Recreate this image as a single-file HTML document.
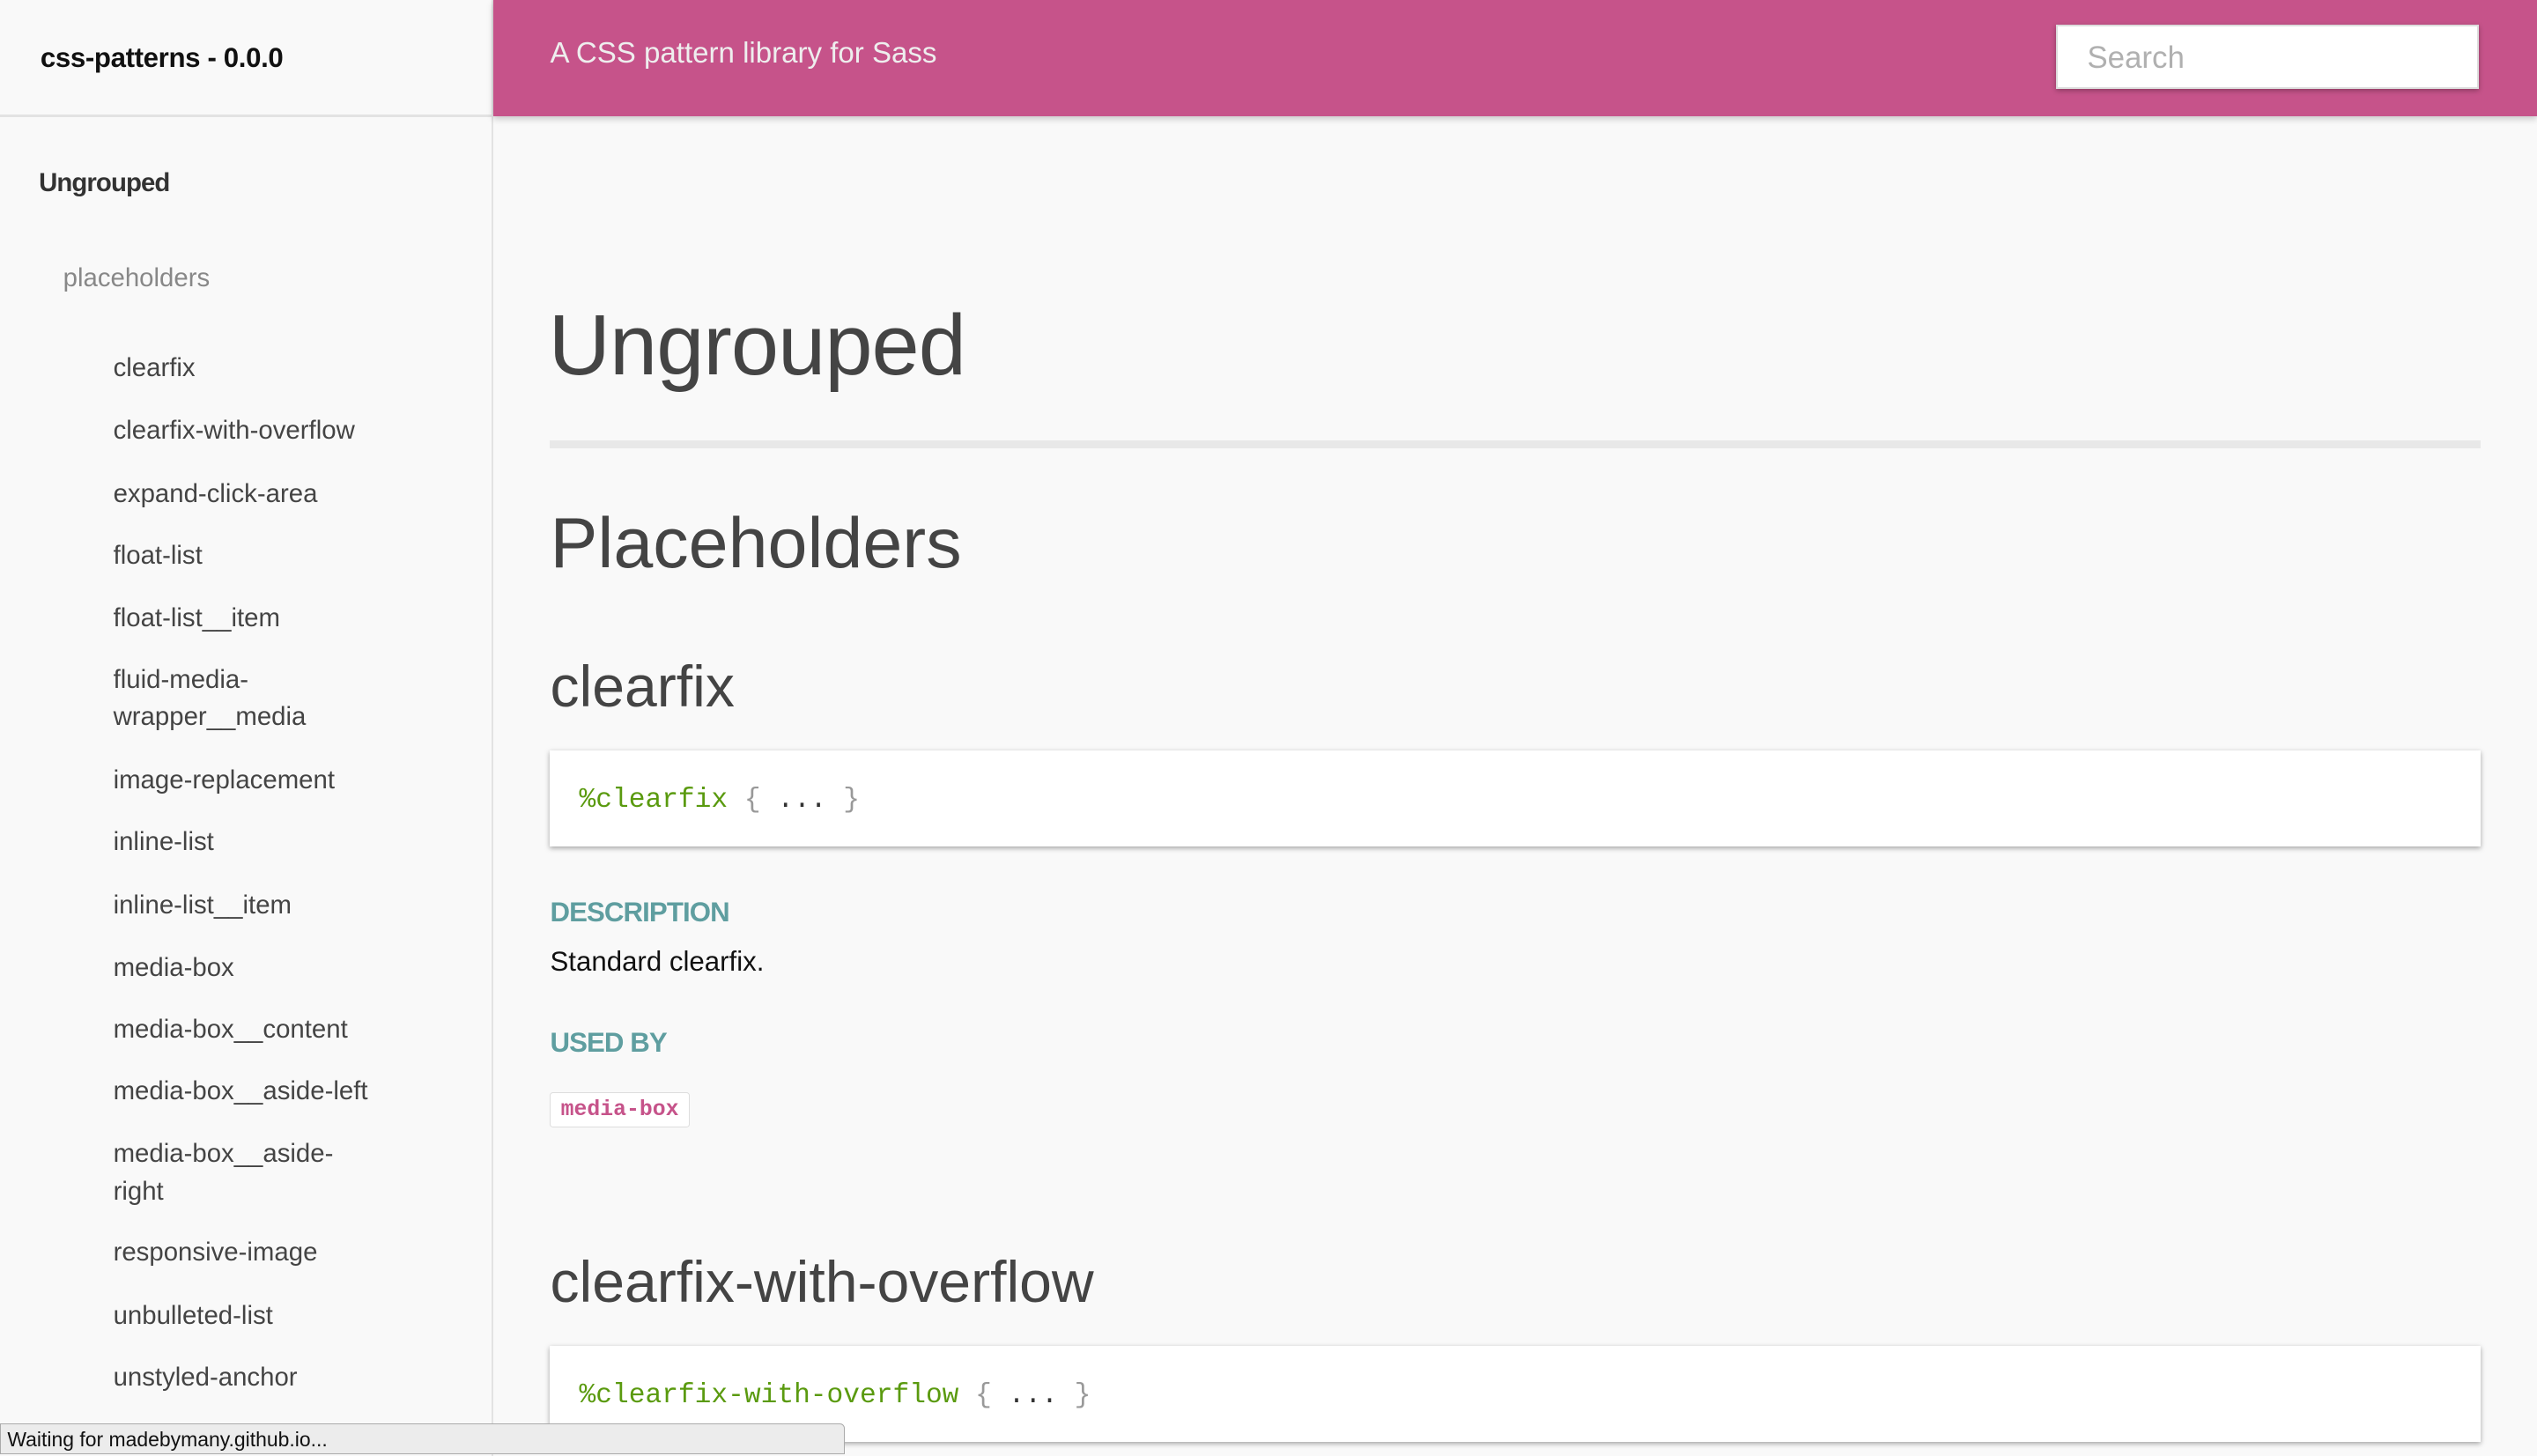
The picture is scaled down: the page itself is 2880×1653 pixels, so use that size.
<!DOCTYPE html>
<html><head><meta charset="utf-8"><style>
html,body{margin:0;padding:0;width:2880px;height:1653px;overflow:hidden;background:#f9f9f9}
#w{zoom:1.836735;width:1568px;height:900px;position:relative;font-family:"Liberation Sans",sans-serif;overflow:hidden;background:#f9f9f9}
.a{position:absolute;white-space:nowrap}
.side{position:absolute;left:0;top:0;width:304px;height:900px;background:#f9f9f9;border-right:1.5px solid #e3e3e3}
.nav{position:absolute;left:70px;font-size:16px;color:#444;line-height:23px;letter-spacing:0px}
.code{position:absolute;left:340px;width:1193px;height:59px;background:#fff;box-shadow:0 1px 3px rgba(0,0,0,.35);font-family:"Liberation Mono",monospace;font-size:17px;line-height:62px}
.code span{padding-left:18px;color:#5a9a0f}
.code b{font-weight:normal;color:#999}
.code i{font-style:normal;color:#333}
.lbl{font-size:17px;font-weight:bold;color:#5f9ea0;letter-spacing:-0.5px}
</style></head><body><div id="w">
<div class="side"></div>
<div class="a" style="left:0;top:71px;width:305px;height:1.5px;background:#e3e3e3"></div>
<div class="a" style="left:25px;top:26px;font-size:17px;font-weight:bold;color:#111;letter-spacing:-0.2px">css-patterns - 0.0.0</div>
<div class="a" style="left:24px;top:104px;font-size:16px;font-weight:bold;color:#333;letter-spacing:-0.5px">Ungrouped</div>
<div class="a" style="left:39px;top:163px;font-size:16px;color:#888;letter-spacing:0px">placeholders</div>
<div class="nav" style="top:216px">clearfix</div>
<div class="nav" style="top:255px">clearfix-with-overflow</div>
<div class="nav" style="top:294px">expand-click-area</div>
<div class="nav" style="top:332px">float-list</div>
<div class="nav" style="top:371px">float-list__item</div>
<div class="nav" style="top:409px">fluid-media-<br>wrapper__media</div>
<div class="nav" style="top:471px">image-replacement</div>
<div class="nav" style="top:509px">inline-list</div>
<div class="nav" style="top:548px">inline-list__item</div>
<div class="nav" style="top:587px">media-box</div>
<div class="nav" style="top:625px">media-box__content</div>
<div class="nav" style="top:663px">media-box__aside-left</div>
<div class="nav" style="top:702px">media-box__aside-<br>right</div>
<div class="nav" style="top:763px">responsive-image</div>
<div class="nav" style="top:802px">unbulleted-list</div>
<div class="nav" style="top:840px">unstyled-anchor</div>

<div class="a" style="left:305px;top:0;width:1263px;height:72px;background:#c6538a;box-shadow:0 2px 4px rgba(0,0,0,.2)"></div>
<div class="a" style="left:340px;top:23px;font-size:18px;color:#eee;letter-spacing:0px">A CSS pattern library for Sass</div>
<div class="a" style="left:1271px;top:15px;width:259px;height:38px;background:#fff;border:1.5px solid #ddd;box-shadow:0 1px 3px rgba(0,0,0,.3)"></div>
<div class="a" style="left:1290px;top:25px;font-size:19px;color:#b0b0b0">Search</div>

<div class="a" style="left:339px;top:183px;font-size:53px;color:#444;letter-spacing:-0.5px">Ungrouped</div>
<div class="a" style="left:340px;top:272px;width:1193px;height:5px;background:#e8e8e8"></div>
<div class="a" style="left:340px;top:311px;font-size:44px;color:#444">Placeholders</div>
<div class="a" style="left:340px;top:404px;font-size:36px;color:#444">clearfix</div>
<div class="code" style="top:464px"><span>%clearfix <b>{</b> <i>...</i> <b>}</b></span></div>
<div class="a lbl" style="top:554px;left:340px">DESCRIPTION</div>
<div class="a" style="left:340px;top:585px;font-size:17px;color:#111">Standard clearfix.</div>
<div class="a lbl" style="top:635px;left:340px">USED BY</div>
<div class="a" style="left:340px;top:675px;width:85px;height:21px;background:#fff;border:1px solid #ddd;border-radius:2px;font-family:'Liberation Mono',monospace;font-size:13.5px;font-weight:bold;color:#c6538a;line-height:21px;text-align:center">media-box</div>
<div class="a" style="left:340px;top:772px;font-size:36px;color:#444">clearfix-with-overflow</div>
<div class="code" style="top:832px"><span>%clearfix-with-overflow <b>{</b> <i>...</i> <b>}</b></span></div>

<div class="a" style="left:0;top:880px;width:522px;height:19px;background:#ececec;border:1px solid #aaa;border-radius:0 3px 0 0;font-size:12.5px;color:#111;line-height:19px;padding-left:4px;box-sizing:border-box">Waiting for madebymany.github.io...</div>
</div></body></html>
